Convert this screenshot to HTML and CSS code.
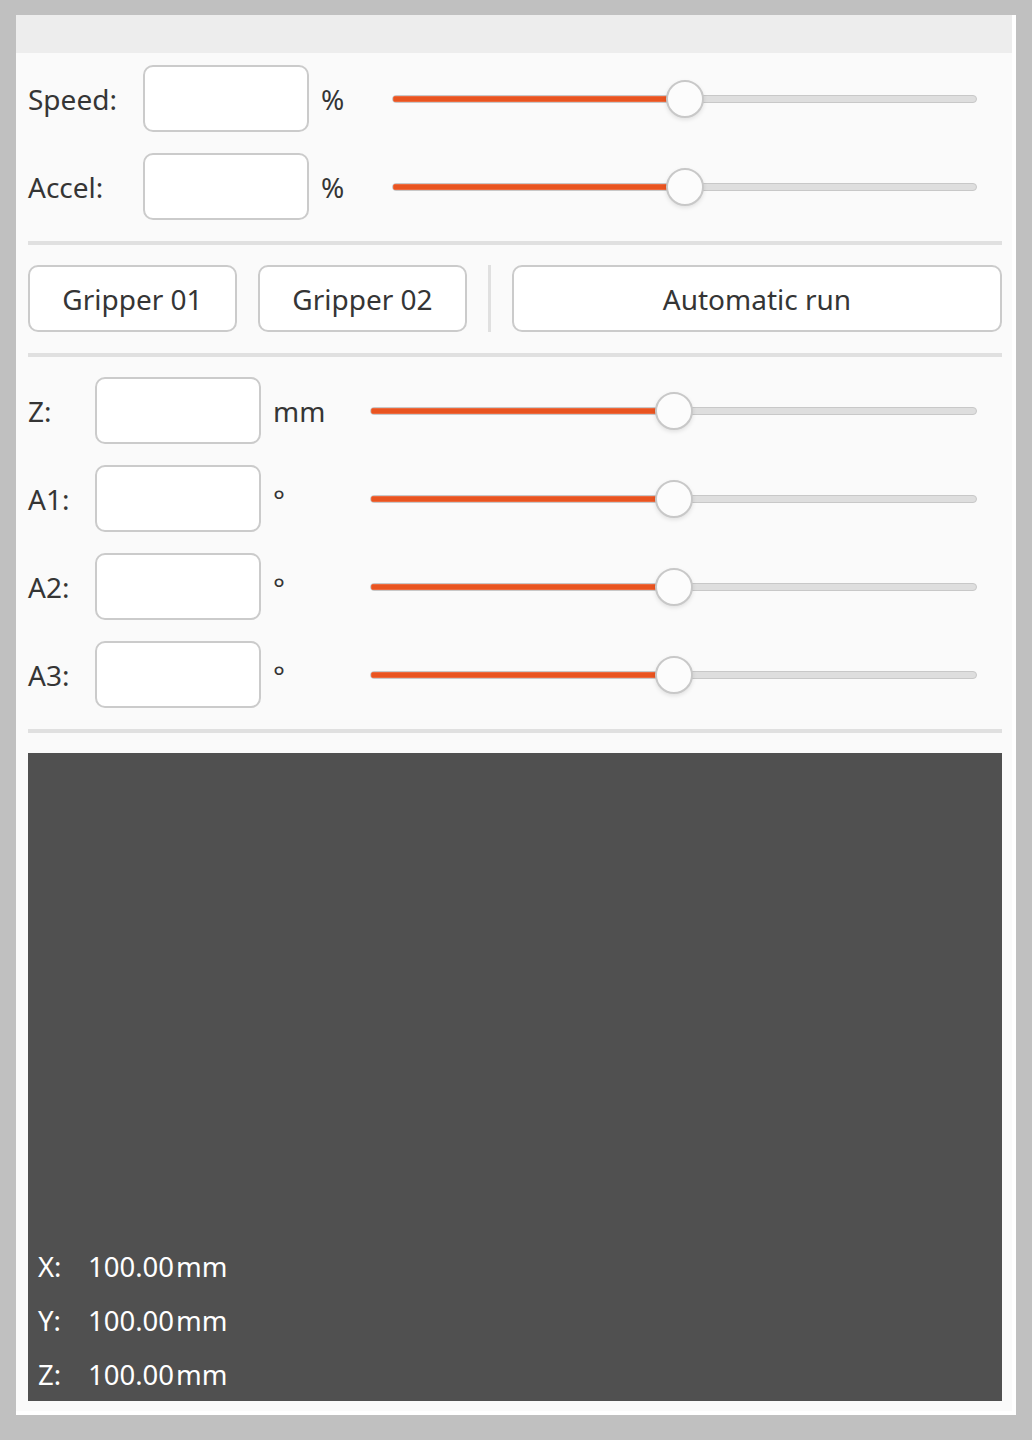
FILE: index.html
```html
<!DOCTYPE html>
<html>
<head>
<meta charset="utf-8">
<link rel="stylesheet" href="styles.css">
</head>
<body>
<div class="window">
  <div class="titlebar"></div>
  <div class="content">
    <div class="row row-top">
      <span class="label">Speed:</span>
      <div class="field"></div>
      <span class="unit">%</span>
      <div class="slider"><div class="track"><div class="fill" style="width:50%"></div></div><div class="knob" style="left:50%"></div></div>
    </div>
    <div class="row row-top">
      <span class="label">Accel:</span>
      <div class="field"></div>
      <span class="unit">%</span>
      <div class="slider"><div class="track"><div class="fill" style="width:50%"></div></div><div class="knob" style="left:50%"></div></div>
    </div>
    <div class="sep"></div>
    <div class="buttons">
      <button class="btn btn-small">Gripper 01</button>
      <button class="btn btn-small">Gripper 02</button>
      <div class="vsep"></div>
      <button class="btn btn-wide">Automatic run</button>
    </div>
    <div class="sep"></div>
    <div class="row row-axis">
      <span class="label">Z:</span>
      <div class="field"></div>
      <span class="unit">mm</span>
      <div class="slider"><div class="track"><div class="fill" style="width:50%"></div></div><div class="knob" style="left:50%"></div></div>
    </div>
    <div class="row row-axis">
      <span class="label">A1:</span>
      <div class="field"></div>
      <span class="unit">°</span>
      <div class="slider"><div class="track"><div class="fill" style="width:50%"></div></div><div class="knob" style="left:50%"></div></div>
    </div>
    <div class="row row-axis">
      <span class="label">A2:</span>
      <div class="field"></div>
      <span class="unit">°</span>
      <div class="slider"><div class="track"><div class="fill" style="width:50%"></div></div><div class="knob" style="left:50%"></div></div>
    </div>
    <div class="row row-axis">
      <span class="label">A3:</span>
      <div class="field"></div>
      <span class="unit">°</span>
      <div class="slider"><div class="track"><div class="fill" style="width:50%"></div></div><div class="knob" style="left:50%"></div></div>
    </div>
    <div class="sep"></div>
    <div class="view">
      <div class="coord"><span class="ckey">X:</span><span class="cval">100.00</span><span class="cunit">mm</span></div>
      <div class="coord"><span class="ckey">Y:</span><span class="cval">100.00</span><span class="cunit">mm</span></div>
      <div class="coord"><span class="ckey">Z:</span><span class="cval">100.00</span><span class="cunit">mm</span></div>
    </div>
  </div>
</div>
</body>
</html>
```
FILE: styles.css
```css
* { box-sizing: border-box; }
html, body { margin: 0; padding: 0; }
body {
  background: #c0c0c0;
  font-family: "Noto Sans", "DejaVu Sans", sans-serif;
  font-size: 28px;
  color: #353535;
}
.window {
  margin: 15px 0 0 16px;
  width: 1000px;
  height: 1400px;
  background: #fafafa;
  border-right: 4px solid #ffffff;
  border-bottom: 4px solid #ffffff;
  display: flex;
  flex-direction: column;
}
.titlebar {
  height: 38px;
  background: #ededed;
  flex: none;
}
.content {
  flex: 1;
  display: flex;
  flex-direction: column;
  gap: 21px;
  padding: 12px 10px 10px 12px;
}
.row {
  display: flex;
  align-items: center;
  height: 67px;
  flex: none;
}
.label { flex: none; }
.row-top .label { width: 115px; }
.row-axis .label { width: 67px; }
.field {
  flex: none;
  width: 166px;
  height: 67px;
  background: #ffffff;
  border: 2px solid #cbcbcb;
  border-radius: 10px;
}
.unit {
  flex: none;
  margin-left: 12px;
}
.row-top .unit { width: 71px; }
.row-axis .unit { width: 97px; }
.slider {
  position: relative;
  flex: 1;
  height: 40px;
  margin-right: 25px;
}
.track {
  position: absolute;
  left: 0;
  right: 0;
  top: 16px;
  height: 8px;
  border-radius: 4px;
  background: #dedede;
  border: 1px solid #c8c8c8;
  overflow: hidden;
}
.fill {
  height: 100%;
  background: #e95420;
  box-shadow: inset 0 0 0 1px #ec6a3f;
}
.knob {
  position: absolute;
  top: 1px;
  width: 38px;
  height: 38px;
  margin-left: -19px;
  border-radius: 50%;
  background: #fcfcfc;
  border: 2px solid #c8c8c8;
  box-shadow: 0 2px 4px rgba(0,0,0,0.10);
}
.sep {
  flex: none;
  height: 4px;
  margin-bottom: -1px;
  background: #e0e0e0;
}
.buttons {
  flex: none;
  display: flex;
  align-items: stretch;
  height: 67px;
}
.btn {
  font: inherit;
  color: #353535;
  background: #ffffff;
  border: 2px solid #cbcbcb;
  border-radius: 10px;
  padding: 0;
  height: 67px;
}
.btn-small { width: 209px; flex: none; margin-right: 21px; }
.vsep {
  flex: none;
  width: 3px;
  background: #e0e0e0;
  margin: 0 21px 0 0;
}
.btn-wide { flex: 1; }
.view {
  flex: 1;
  background: #505050;
  color: #ffffff;
  font-size: 27.5px;
  display: flex;
  flex-direction: column;
  justify-content: flex-end;
  padding: 0 10px;
}
.coord {
  height: 54px;
  display: flex;
  align-items: center;
}
.ckey { width: 50px; }
.cunit { margin-left: 2px; }
```
